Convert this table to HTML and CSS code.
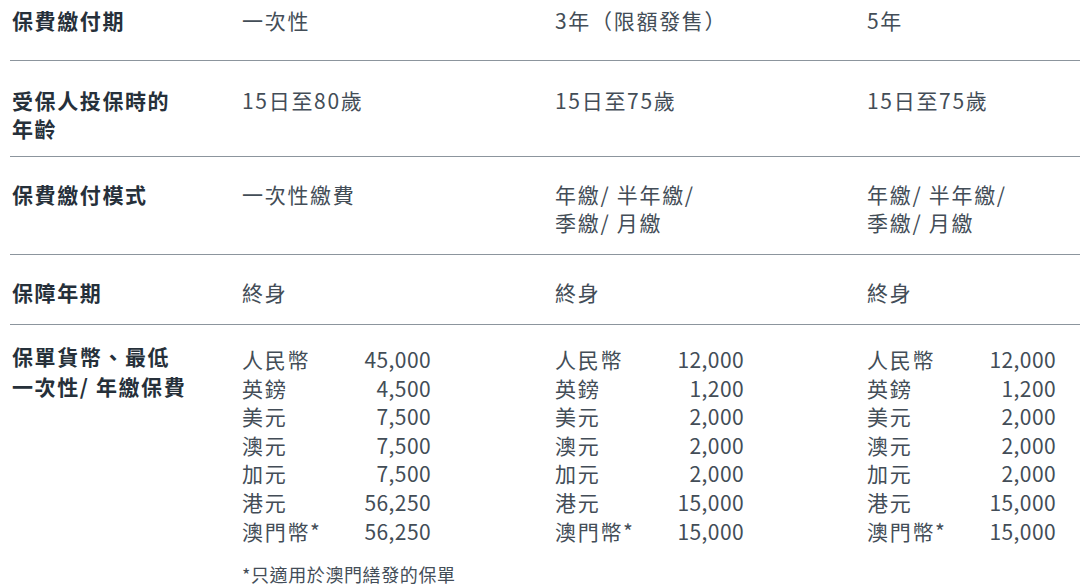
FILE: index.html
```html
<!DOCTYPE html>
<html lang="zh-Hant">
<head>
<meta charset="utf-8">
<link rel="stylesheet" href="styles.css">
</head>
<body>
<div class="table">
  <div class="row row-first">
    <div class="label">保費繳付期</div>
    <div class="cell">一次性</div>
    <div class="cell">3年（限額發售）</div>
    <div class="cell">5年</div>
  </div>
  <div class="row row-age">
    <div class="label">受保人投保時的<br>年齡</div>
    <div class="cell">15日至80歲</div>
    <div class="cell">15日至75歲</div>
    <div class="cell">15日至75歲</div>
  </div>
  <div class="row">
    <div class="label">保費繳付模式</div>
    <div class="cell">一次性繳費</div>
    <div class="cell">年繳/ 半年繳/<br>季繳/ 月繳</div>
    <div class="cell">年繳/ 半年繳/<br>季繳/ 月繳</div>
  </div>
  <div class="row">
    <div class="label">保障年期</div>
    <div class="cell">終身</div>
    <div class="cell">終身</div>
    <div class="cell">終身</div>
  </div>
  <div class="row row-last">
    <div class="label label-tall">保單貨幣、最低<br>一次性/ 年繳保費</div>
    <div class="cell">
      <div class="money">
        <span>人民幣</span><span class="num">45,000</span>
        <span>英鎊</span><span class="num">4,500</span>
        <span>美元</span><span class="num">7,500</span>
        <span>澳元</span><span class="num">7,500</span>
        <span>加元</span><span class="num">7,500</span>
        <span>港元</span><span class="num">56,250</span>
        <span>澳門幣*</span><span class="num">56,250</span>
      </div>
      <p class="note">*只適用於澳門繕發的保單</p>
    </div>
    <div class="cell">
      <div class="money">
        <span>人民幣</span><span class="num">12,000</span>
        <span>英鎊</span><span class="num">1,200</span>
        <span>美元</span><span class="num">2,000</span>
        <span>澳元</span><span class="num">2,000</span>
        <span>加元</span><span class="num">2,000</span>
        <span>港元</span><span class="num">15,000</span>
        <span>澳門幣*</span><span class="num">15,000</span>
      </div>
    </div>
    <div class="cell">
      <div class="money">
        <span>人民幣</span><span class="num">12,000</span>
        <span>英鎊</span><span class="num">1,200</span>
        <span>美元</span><span class="num">2,000</span>
        <span>澳元</span><span class="num">2,000</span>
        <span>加元</span><span class="num">2,000</span>
        <span>港元</span><span class="num">15,000</span>
        <span>澳門幣*</span><span class="num">15,000</span>
      </div>
    </div>
  </div>
</div>
</body>
</html>
```

FILE: styles.css
```css
html, body {
  margin: 0;
  padding: 0;
  background: #ffffff;
  overflow: hidden;
}

body {
  font-family: "Noto Sans CJK TC", "Noto Sans", sans-serif;
  font-size: 21px;
  line-height: 28px;
  color: #434d57;
}

.table {
  margin-left: 10px;
}

.row {
  display: grid;
  grid-template-columns: 232px 313px 312px 1fr;
  padding: 23px 0 18px;
  border-bottom: 1.5px solid #8c959d;
}

.row-first {
  padding-top: 6px;
  padding-bottom: 26px;
}

.row-age {
  padding-top: 25px;
  padding-bottom: 14px;
}

.row-last {
  padding-top: 20px;
  border-bottom: none;
}

.label {
  font-weight: 700;
  color: #26303a;
  letter-spacing: 1.6px;
  padding-left: 2px;
}

.label-tall {
  line-height: 29.5px;
  margin-top: -3px;
}

.cell {
  letter-spacing: 1.7px;
}

.money {
  display: grid;
  grid-template-columns: auto 1fr;
  width: 189px;
  line-height: 28.6px;
  letter-spacing: 1.7px;
}

.money .num {
  text-align: right;
  letter-spacing: 0.4px;
}

.note {
  margin: 17px 0 0;
  font-size: 18px;
  line-height: 24px;
  letter-spacing: 0.6px;
}
```
